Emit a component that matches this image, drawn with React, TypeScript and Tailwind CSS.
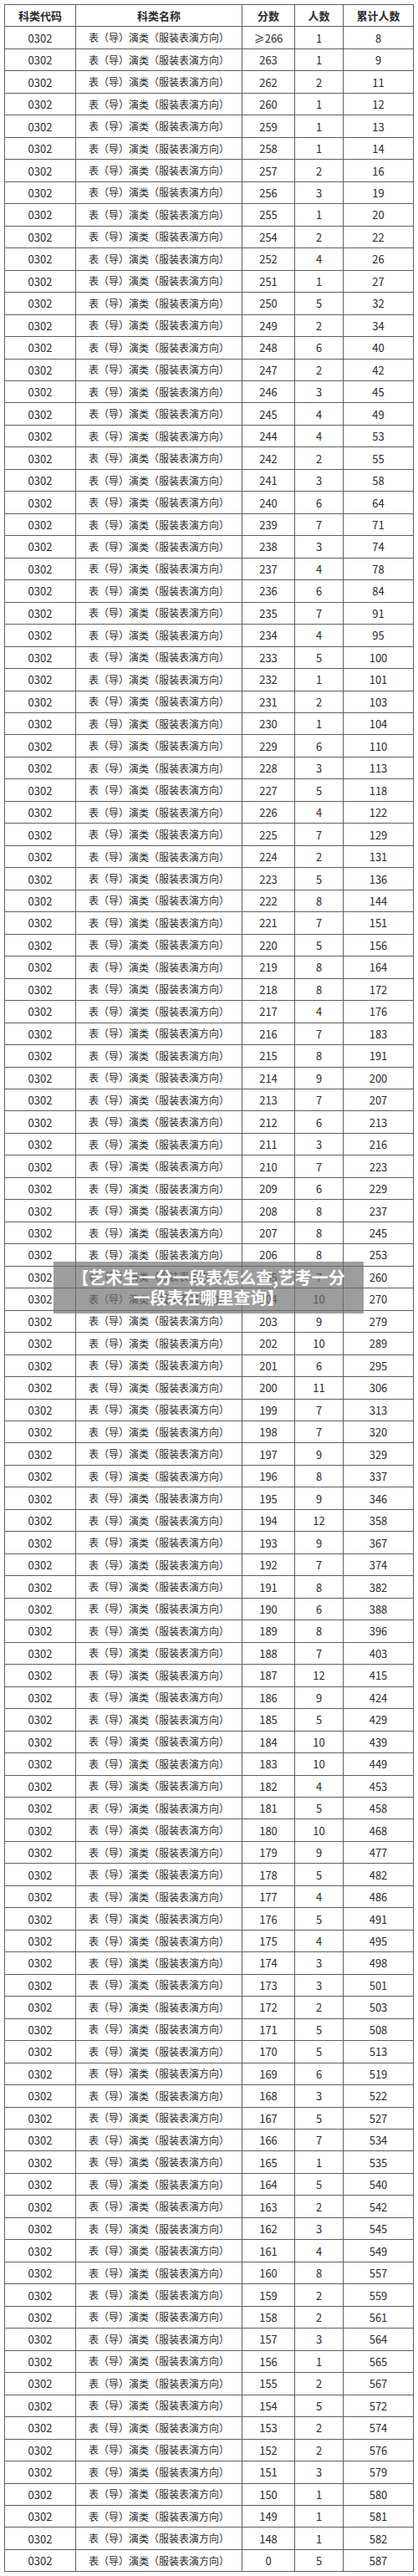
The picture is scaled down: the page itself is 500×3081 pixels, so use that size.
import React from "react";

// [分数, 人数, 累计人数]
const rows: [string, number, number][] = [
  ["≥266", 1, 8],
  ["263", 1, 9],
  ["262", 2, 11],
  ["260", 1, 12],
  ["259", 1, 13],
  ["258", 1, 14],
  ["257", 2, 16],
  ["256", 3, 19],
  ["255", 1, 20],
  ["254", 2, 22],
  ["252", 4, 26],
  ["251", 1, 27],
  ["250", 5, 32],
  ["249", 2, 34],
  ["248", 6, 40],
  ["247", 2, 42],
  ["246", 3, 45],
  ["245", 4, 49],
  ["244", 4, 53],
  ["242", 2, 55],
  ["241", 3, 58],
  ["240", 6, 64],
  ["239", 7, 71],
  ["238", 3, 74],
  ["237", 4, 78],
  ["236", 6, 84],
  ["235", 7, 91],
  ["234", 4, 95],
  ["233", 5, 100],
  ["232", 1, 101],
  ["231", 2, 103],
  ["230", 1, 104],
  ["229", 6, 110],
  ["228", 3, 113],
  ["227", 5, 118],
  ["226", 4, 122],
  ["225", 7, 129],
  ["224", 2, 131],
  ["223", 5, 136],
  ["222", 8, 144],
  ["221", 7, 151],
  ["220", 5, 156],
  ["219", 8, 164],
  ["218", 8, 172],
  ["217", 4, 176],
  ["216", 7, 183],
  ["215", 8, 191],
  ["214", 9, 200],
  ["213", 7, 207],
  ["212", 6, 213],
  ["211", 3, 216],
  ["210", 7, 223],
  ["209", 6, 229],
  ["208", 8, 237],
  ["207", 8, 245],
  ["206", 8, 253],
  ["205", 7, 260],
  ["204", 10, 270],
  ["203", 9, 279],
  ["202", 10, 289],
  ["201", 6, 295],
  ["200", 11, 306],
  ["199", 7, 313],
  ["198", 7, 320],
  ["197", 9, 329],
  ["196", 8, 337],
  ["195", 9, 346],
  ["194", 12, 358],
  ["193", 9, 367],
  ["192", 7, 374],
  ["191", 8, 382],
  ["190", 6, 388],
  ["189", 8, 396],
  ["188", 7, 403],
  ["187", 12, 415],
  ["186", 9, 424],
  ["185", 5, 429],
  ["184", 10, 439],
  ["183", 10, 449],
  ["182", 4, 453],
  ["181", 5, 458],
  ["180", 10, 468],
  ["179", 9, 477],
  ["178", 5, 482],
  ["177", 4, 486],
  ["176", 5, 491],
  ["175", 4, 495],
  ["174", 3, 498],
  ["173", 3, 501],
  ["172", 2, 503],
  ["171", 5, 508],
  ["170", 5, 513],
  ["169", 6, 519],
  ["168", 3, 522],
  ["167", 5, 527],
  ["166", 7, 534],
  ["165", 1, 535],
  ["164", 5, 540],
  ["163", 2, 542],
  ["162", 3, 545],
  ["161", 4, 549],
  ["160", 8, 557],
  ["159", 2, 559],
  ["158", 2, 561],
  ["157", 3, 564],
  ["156", 1, 565],
  ["155", 2, 567],
  ["154", 5, 572],
  ["153", 2, 574],
  ["152", 2, 576],
  ["151", 3, 579],
  ["150", 1, 580],
  ["149", 1, 581],
  ["148", 1, 582],
  ["0", 5, 587],
];

const rowClass =
  "grid grid-cols-[85px_199px_63px_58px_84px] h-[26.47px] text-[#2b2b2b]";
const cell =
  "flex items-center justify-center border-r border-b border-[#5f5f5f] text-[13px] leading-none";

export default function App() {
  return (
    <div
      className="relative w-[500px] h-[3081px] bg-white pt-[5px] pl-[5px]"
      style={{ fontFamily: "'Noto Sans CJK SC', 'Noto Sans', sans-serif" }}
    >
      {/* 表格 */}
      <div className="w-[490px] border-l border-t border-[#5f5f5f]">
        <div className={`${rowClass} font-bold`}>
          <div className={cell}>科类代码</div>
          <div className={cell}>科类名称</div>
          <div className={cell}>分数</div>
          <div className={cell}>人数</div>
          <div className={cell}>累计人数</div>
        </div>
        {rows.map(([score, count, total]) => (
          <div key={score} className={rowClass}>
            <div className={cell}>0302</div>
            <div className={`${cell} !text-[12px]`}>表（导）演类（服装表演方向）</div>
            <div className={cell}>{score}</div>
            <div className={cell}>{count}</div>
            <div className={cell}>{total}</div>
          </div>
        ))}
      </div>

      {/* 标题遮罩 */}
      <div className="absolute left-[64px] top-[1509px] w-[371px] h-[62px] bg-[rgba(110,110,110,0.68)] flex items-center justify-center">
        <p className="w-[336px] text-white font-bold text-[20px] leading-[24px] text-center">
          【艺术生一分一段表怎么查,艺考一分一段表在哪里查询】
        </p>
      </div>
    </div>
  );
}
